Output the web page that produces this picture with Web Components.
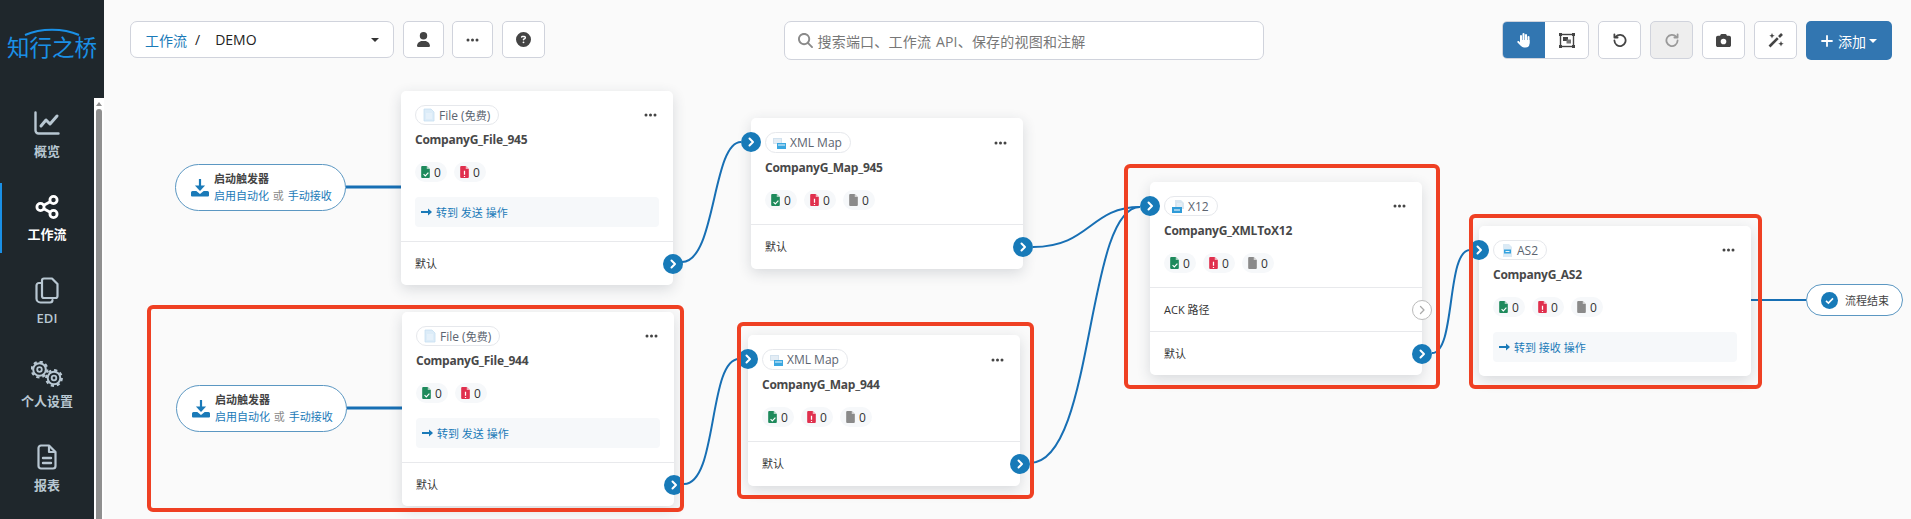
<!DOCTYPE html>
<html lang="zh">
<head>
<meta charset="utf-8">
<title>工作流</title>
<style>
	html, body{ margin: 0; height: 100%; overflow: hidden; background: #fafafa; }
	body{ font-family: "Open Sans", "Noto Sans CJK SC", sans-serif; font-size: 14px; color: #333; }
	.cjk{ font-size: 11px; }
</style>
</head>
<body>
<app-shell>
	<side-nav slot="nav">
		<nav-item icon="chart">概览</nav-item>
		<nav-item icon="share" active>工作流</nav-item>
		<nav-item icon="copy">EDI</nav-item>
		<nav-item icon="gears">个人设置</nav-item>
		<nav-item icon="report">报表</nav-item>
	</side-nav>
	<top-bar slot="top"></top-bar>
	<flow-canvas>
		<flow-wires></flow-wires>

		<start-pill x="175" y="164"></start-pill>
		<start-pill x="176" y="385"></start-pill>

		<flow-card x="401" y="91" icon="file">
			<span slot="chip">File (<span class="cjk">免费</span>)</span>
			<span slot="name">CompanyG_File_945</span>
			<stat-pill slot="stats" type="ok"></stat-pill>
			<stat-pill slot="stats" type="err"></stat-pill>
			<go-action slot="body">转到 发送 操作</go-action>
			<out-row>默认</out-row>
		</flow-card>

		<flow-card x="402" y="312" icon="file">
			<span slot="chip">File (<span class="cjk">免费</span>)</span>
			<span slot="name">CompanyG_File_944</span>
			<stat-pill slot="stats" type="ok"></stat-pill>
			<stat-pill slot="stats" type="err"></stat-pill>
			<go-action slot="body">转到 发送 操作</go-action>
			<out-row>默认</out-row>
		</flow-card>

		<flow-card x="751" y="118" icon="map" in tall>
			<span slot="chip">XML Map</span>
			<span slot="name">CompanyG_Map_945</span>
			<stat-pill slot="stats" type="ok"></stat-pill>
			<stat-pill slot="stats" type="err"></stat-pill>
			<stat-pill slot="stats" type="none"></stat-pill>
			<out-row tall>默认</out-row>
		</flow-card>

		<flow-card x="748" y="335" icon="map" in tall>
			<span slot="chip">XML Map</span>
			<span slot="name">CompanyG_Map_944</span>
			<stat-pill slot="stats" type="ok"></stat-pill>
			<stat-pill slot="stats" type="err"></stat-pill>
			<stat-pill slot="stats" type="none"></stat-pill>
			<out-row tall>默认</out-row>
		</flow-card>

		<flow-card x="1150" y="182" icon="x12" in>
			<span slot="chip">X12</span>
			<span slot="name">CompanyG_XMLToX12</span>
			<stat-pill slot="stats" type="ok"></stat-pill>
			<stat-pill slot="stats" type="err"></stat-pill>
			<stat-pill slot="stats" type="none"></stat-pill>
			<out-row off>ACK 路径</out-row>
			<out-row>默认</out-row>
		</flow-card>

		<flow-card x="1479" y="226" icon="as2" in>
			<span slot="chip">AS2</span>
			<span slot="name">CompanyG_AS2</span>
			<stat-pill slot="stats" type="ok"></stat-pill>
			<stat-pill slot="stats" type="err"></stat-pill>
			<stat-pill slot="stats" type="none"></stat-pill>
			<go-action slot="body">转到 接收 操作</go-action>
		</flow-card>

		<end-pill x="1806" y="284"></end-pill>

		<mark-box x="147" y="305" w="537" h="207"></mark-box>
		<mark-box x="737" y="322" w="297" h="177"></mark-box>
		<mark-box x="1124" y="164" w="316" h="225"></mark-box>
		<mark-box x="1469" y="214" w="293" h="175"></mark-box>
	</flow-canvas>
</app-shell>

<script>
const FONT = '"Open Sans", "Noto Sans CJK SC", sans-serif';

const ICONS = {
	chart: `<svg width="26" height="24" viewBox="0 0 26 24" fill="none" stroke="#b8c7d2" stroke-width="2.4" stroke-linecap="round" stroke-linejoin="round"><path d="M1.500 1.500v18a3 3 0 0 0 3 3h20"/><path d="M7 15l5-6 4 4 7-8" stroke-width="3"/></svg>`,
	share: `<svg width="24" height="24" viewBox="0 0 24 24" fill="none" stroke="#fff" stroke-width="2.800"><circle cx="18.500" cy="5" r="3.600"/><circle cx="5.500" cy="12" r="3.600"/><circle cx="18.500" cy="19" r="3.600"/><path d="M8.800 10.200l6.400-3.400M8.800 13.800l6.400 3.400"/></svg>`,
	copy: `<svg width="24" height="27" viewBox="0 0 24 27" fill="none" stroke="#b8c7d2" stroke-width="2.200" stroke-linejoin="round" stroke-linecap="round"><path d="M7 3.500a2 2 0 0 1 2-2h8l5.500 5.500v12a2 2 0 0 1-2 2H9a2 2 0 0 1-2-2z"/><path d="M7 6H4a2.500 2.500 0 0 0-2.500 2.500v13A4 4 0 0 0 5.500 25.500H15a2.500 2.500 0 0 0 2.500-2.500"/></svg>`,
	gears: `<svg width="32" height="26" viewBox="0 0 32 26" fill="none" stroke="#b8c7d2"><g><circle cx="8.500" cy="8.500" r="6.300" stroke-width="2"/><circle cx="8.500" cy="8.500" r="7.800" stroke-width="2.200" stroke-dasharray="3.200 2.900"/><circle cx="8.500" cy="8.500" r="2.300" stroke-width="1.800"/></g><g><circle cx="23" cy="17" r="6.300" stroke-width="2"/><circle cx="23" cy="17" r="7.800" stroke-width="2.200" stroke-dasharray="3.200 2.900"/><circle cx="23" cy="17" r="2.300" stroke-width="1.800"/></g></svg>`,
	report: `<svg width="20" height="26" viewBox="0 0 20 26" fill="none" stroke="#b8c7d2" stroke-width="2.200" stroke-linejoin="round"><path d="M1.500 4a2.500 2.500 0 0 1 2.500-2.500h8l6.500 6.500v14a2.500 2.500 0 0 1-2.500 2.500H4a2.500 2.500 0 0 1-2.500-2.500z"/><path d="M12 1.500V8h6.500"/><path d="M6 14h8M6 19h8" stroke-width="2.400" stroke-linecap="round"/></svg>`,
	user: `<svg width="13" height="15" viewBox="0 0 448 512" fill="#444"><path d="M224 256A128 128 0 1 0 224 0a128 128 0 1 0 0 256zm-45.700 48C79.800 304 0 383.800 0 482.300C0 498.700 13.300 512 29.700 512H418.300c16.400 0 29.700-13.300 29.700-29.700C448 383.800 368.200 304 269.700 304H178.300z"/></svg>`,
	dots: `<svg width="13" height="4" viewBox="0 0 13 4" fill="#444"><circle cx="2" cy="2" r="1.500"/><circle cx="6.500" cy="2" r="1.500"/><circle cx="11" cy="2" r="1.500"/></svg>`,
	help: `<svg width="15" height="15" viewBox="0 0 512 512" fill="#444"><path d="M256 512A256 256 0 1 0 256 0a256 256 0 1 0 0 512zM169.800 165.300c7.900-22.300 29.100-37.300 52.800-37.300h58.300c34.900 0 63.100 28.300 63.100 63.100c0 22.600-12.100 43.500-31.700 54.800L280 264.400c-.2 13-10.900 23.600-24 23.600c-13.300 0-24-10.700-24-24V250.500c0-8.600 4.600-16.500 12.100-20.800l44.300-25.400c4.700-2.700 7.600-7.700 7.600-13.100c0-8.400-6.800-15.100-15.100-15.100H222.600c-3.400 0-6.400 2.100-7.500 5.300l-.4 1.200c-4.400 12.500-18.200 19-30.600 14.600s-19-18.200-14.600-30.600l.4-1.200zM224 352a32 32 0 1 1 64 0 32 32 0 1 1 -64 0z"/></svg>`,
	search: `<svg width="15" height="15" viewBox="0 0 512 512" fill="#8a8a8a"><path d="M416 208c0 45.900-14.900 88.300-40 122.700L502.600 457.400c12.500 12.500 12.500 32.800 0 45.300s-32.800 12.500-45.300 0L330.700 376c-34.400 25.200-76.800 40-122.700 40C93.100 416 0 322.900 0 208S93.100 0 208 0S416 93.100 416 208zM208 352a144 144 0 1 0 0-288 144 144 0 1 0 0 288z"/></svg>`,
	hand: `<svg width="16" height="16" viewBox="0 0 16 16" fill="#fff"><rect x="4" y="3" width="2" height="8" rx="1"/><rect x="6.500" y="1" width="2" height="8" rx="1"/><rect x="9" y="2" width="2" height="8" rx="1"/><rect x="11.500" y="4" width="2" height="8" rx="1"/><path d="M4 8h9.500v3.500a4 4 0 0 1-4 4H8a4 4 0 0 1-3-1.400L1.500 10.500c-.7-.9.600-2 1.500-1.200L4 10.500z"/></svg>`,
	frame: `<svg width="16" height="15" viewBox="0 0 16 15" fill="none" stroke="#444"><rect x="1.500" y="1.500" width="13" height="12" stroke-width="1.400"/><g fill="#444" stroke="none"><rect width="3" height="3"/><rect x="13" width="3" height="3"/><rect y="12" width="3" height="3"/><rect x="13" y="12" width="3" height="3"/><rect x="4" y="4" width="5" height="4"/></g><rect x="7.500" y="6.500" width="4.500" height="4" fill="#777" stroke="none"/></svg>`,
	undo: `<svg width="14" height="14" viewBox="0 0 14 14" fill="none" stroke="#444" stroke-width="1.800" stroke-linecap="round" stroke-linejoin="round"><path d="M2.800 3.700A5.600 5.600 0 1 1 1.400 7.500"/><path d="M1.400 1.300v3.200h3.200"/></svg>`,
	redo: `<svg width="14" height="14" viewBox="0 0 14 14" fill="none" stroke="#999" stroke-width="1.800" stroke-linecap="round" stroke-linejoin="round"><path d="M11.200 3.700A5.600 5.600 0 1 0 12.600 7.500"/><path d="M12.600 1.300v3.200H9.400"/></svg>`,
	camera: `<svg width="15" height="15" viewBox="0 0 512 512" fill="#444"><path d="M149.100 64.800L138.700 96H64C28.700 96 0 124.700 0 160V416c0 35.300 28.700 64 64 64H448c35.300 0 64-28.700 64-64V160c0-35.300-28.700-64-64-64H373.300L362.900 64.800C356.400 45.200 338.100 32 317.400 32H194.600c-20.700 0-39 13.200-45.500 32.800zM256 192a96 96 0 1 1 0 192 96 96 0 1 1 0-192z"/></svg>`,
	wand: `<svg width="16" height="16" viewBox="0 0 16 16" fill="#444"><path d="M1.500 14.500L9.800 6.200" stroke="#444" stroke-width="2.600"/><path d="M11 5L14 2" stroke="#444" stroke-width="2.600"/><path d="M4 1l.8 1.900 1.900.8-1.900.8L4 6.400l-.8-1.900-1.900-.8 1.900-.8zM13 9l.8 1.900 1.900.8-1.900.8L13 14.400l-.8-1.900-1.900-.8 1.900-.8z"/></svg>`,
	plus: `<svg width="12" height="12" viewBox="0 0 12 12" stroke="#fff" stroke-width="1.800" stroke-linecap="round"><path d="M6 1v10M1 6h10"/></svg>`,
	download: `<svg width="18" height="18" viewBox="0 0 18 18" fill="#1a7ab8"><path d="M9 .5v9.200" stroke="#1a7ab8" stroke-width="2.200" stroke-linecap="round"/><path d="M3.900 6.500h10.200L9 12z"/><path d="M1.500 12h3.800L9 15l3.700-3h3.800a1.500 1.500 0 0 1 1.500 1.500v3a1 1 0 0 1-1 1H1a1 1 0 0 1-1-1v-3A1.500 1.500 0 0 1 1.500 12z"/></svg>`,
	chipfile: `<svg width="12" height="14" viewBox="0 0 12 14"><path d="M1 1h7l3 3v9H1z" fill="#dcecf8" stroke="#c6dff1" stroke-width=".8"/><path d="M3 6h6M3 8h6M3 10h6" stroke="#f3f9fd" stroke-width=".8"/></svg>`,
	chipmap: `<svg width="13" height="12" viewBox="0 0 13 12"><path d="M0 1h9v6H0z" fill="#d3e2ee"/><path d="M1 3h7M1 5h7" stroke="#fff" stroke-width=".8"/><path d="M4 6h9v6H4z" fill="#3ba7e0"/><path d="M5 8h7" stroke="#fff" stroke-width=".9"/></svg>`,
	chipx12: `<svg width="12" height="13" viewBox="0 0 12 13"><path d="M3 0h6l3 3v6H3z" fill="#d9e6f0"/><path d="M5 4h5M5 6h5" stroke="#f5fafd" stroke-width=".8"/><path d="M0 7h10v6H0z" fill="#2f9bd8"/><path d="M2 10h6" stroke="#fff" stroke-width="1"/></svg>`,
	chipas2: `<svg width="12" height="13" viewBox="0 0 12 13"><path d="M2 0h6l3 3v10H2z" fill="#dbeaf5"/><path d="M3 5.500h7v4H3z" fill="#35a3df"/><path d="M4.500 7.500h4" stroke="#fff" stroke-width=".9"/></svg>`
};

// nodes on the canvas give page coordinates, the canvas starts below the toolbar
function place(el){
	el.style.left = (el.getAttribute('x') - 104) + 'px';
	el.style.top = (el.getAttribute('y') - 80) + 'px';
}

class AppShell extends HTMLElement{
	constructor(){
		super();
		this.attachShadow({mode: 'open'});
		this.shadowRoot.innerHTML = `
		<style>
			:host{ display: flex; width: 100%; height: 100vh; font-family: ${FONT}; }
			main{ flex: 1; display: flex; flex-direction: column; min-width: 0; }
		</style>
		<slot name="nav"></slot>
		<main><slot name="top"></slot><slot></slot></main>`;
	}
}

class SideNav extends HTMLElement{
	constructor(){
		super();
		this.attachShadow({mode: 'open'});
		this.shadowRoot.innerHTML = `
		<style>
			:host{ display: flex; flex-direction: column; width: 104px; flex: none; background: #1f272c; overflow: hidden; }
			.logo{ height: 98px; box-sizing: border-box; padding: 28px 0 0 0; display: flex; flex-direction: column; align-items: center; }
			.logo svg{ display: block; margin-bottom: -3px; }
			.logo span{ color: #1a90e6; font-size: 22.5px; line-height: 30px; white-space: nowrap; }
			.rest{ flex: 1; display: flex; min-height: 0; }
			nav{ width: 94px; display: flex; flex-direction: column; gap: 13.5px; padding-top: 1px; }
			.track{ width: 10px; background: #fff; position: relative; display: flex; flex-direction: column; }
			.arrow{ height: 11px; display: flex; justify-content: center; align-items: center; padding-left: 0; }
			.thumb{ flex: 1; width: 6px; margin-left: 2px; background: #8f8f8f; border-radius: 3px 3px 0 0; }
		</style>
		<div class="logo">
			<svg width="56" height="8" viewBox="0 0 56 8" fill="none"><path d="M1 7C17 0 39 0 55 7" stroke="#1a90e6" stroke-width="2"/></svg>
			<span>知行之桥</span>
		</div>
		<div class="rest">
			<nav><slot></slot></nav>
			<div class="track">
				<div class="arrow"><svg width="6" height="4"><path d="M3 0l3 4H0z" fill="#8f8f8f"/></svg></div>
				<div class="thumb"></div>
			</div>
		</div>`;
	}
}

class NavItem extends HTMLElement{
	constructor(){
		super();
		this.attachShadow({mode: 'open'});
		this.shadowRoot.innerHTML = `
		<style>
			:host{ display: flex; flex-direction: column; align-items: center; height: 70px; box-sizing: border-box; padding-top: 10.5px; flex: none; position: relative; color: #b8c7d2; font-size: 13px; font-weight: 600; }
			:host([active]){ color: #fff; font-weight: 700; }
			:host([active])::before{ content: ''; position: absolute; left: 0; top: 0; bottom: 0; width: 1.500px; background: #1a90e6; }
			.icon{ height: 27px; display: flex; align-items: center; justify-content: center; }
			.text{ margin-top: 4px; line-height: 20px; white-space: nowrap; }
		</style>
		<div class="icon">${ICONS[this.getAttribute('icon')]}</div>
		<div class="text"><slot></slot></div>`;
	}
}

class ToolBtn extends HTMLElement{
	constructor(){
		super();
		this.attachShadow({mode: 'open'});
		this.shadowRoot.innerHTML = `
		<style>
			:host{ display: flex; align-items: center; justify-content: center; box-sizing: border-box; width: var(--w, 43px); height: var(--h, 38px); background: #fff; border: 1px solid #d0d3dc; border-radius: 5px; flex: none; }
			:host([off]){ background: #eee; }
		</style>
		${ICONS[this.getAttribute('icon')]}`;
	}
}

class CrumbSelect extends HTMLElement{
	constructor(){
		super();
		this.attachShadow({mode: 'open'});
		this.shadowRoot.innerHTML = `
		<style>
			:host{ display: flex; align-items: center; box-sizing: border-box; width: 264px; height: 37px; background: #fff; border: 1px solid #d0d3dc; border-radius: 7px; padding: 0 14px; font-size: 14px; color: #222; flex: none; }
			a{ color: #1a7ab8; }
			.sep{ margin: 0 15px 0 8px; }
			.caret{ margin-left: auto; width: 0; height: 0; border: 4px solid transparent; border-top: 4.500px solid #333; border-bottom: 0; }
		</style>
		<a>工作流</a><span class="sep">/</span><span>DEMO</span><span class="caret"></span>`;
	}
}

class SearchBox extends HTMLElement{
	constructor(){
		super();
		this.attachShadow({mode: 'open'});
		this.shadowRoot.innerHTML = `
		<style>
			:host{ display: flex; align-items: center; gap: 5px; box-sizing: border-box; width: 480px; height: 39px; background: #fff; border: 1px solid #d0d3dc; border-radius: 7px; padding: 0 13px; font-size: 14px; color: #777; flex: none; letter-spacing: .2px; word-spacing: 1px; }
			svg{ flex: none; }
		</style>
		${ICONS.search}<span>搜索端口、工作流 API、保存的视图和注解</span>`;
	}
}

class TopBar extends HTMLElement{
	constructor(){
		super();
		this.attachShadow({mode: 'open'});
		this.shadowRoot.innerHTML = `
		<style>
			:host{ display: flex; justify-content: space-between; align-items: flex-start; box-sizing: border-box; height: 80px; padding: 21px 19px 0 26px; flex: none; position: relative; z-index: 2; }
			.group{ display: flex; gap: 9px; align-items: flex-start; }
			.left tool-btn{ --h: 37px; --w: 41px; }
			.left tool-btn:nth-child(3){ margin-left: -1px; }
			.left tool-btn:last-child{ --w: 43px; }
			.toggle{ display: flex; width: 87px; height: 38px; box-sizing: border-box; border: 1px solid #d0d3dc; border-radius: 5px; overflow: hidden; background: #fff; }
			.toggle div{ display: flex; align-items: center; justify-content: center; flex: 1; }
			.toggle .on{ background: #3276b1; flex: none; width: 42px; }
			.add{ display: flex; align-items: center; justify-content: center; box-sizing: border-box; width: 86px; height: 39px; border-radius: 5px; background: #3276b1; color: #fff; font-size: 14px; }
			.add span{ margin: 0 3px 0 5px; }
			.add i{ width: 0; height: 0; border: 4px solid transparent; border-top: 4px solid #fff; border-bottom: 0; }
		</style>
		<div class="group left">
			<crumb-select></crumb-select>
			<tool-btn icon="user"></tool-btn>
			<tool-btn icon="dots"></tool-btn>
			<tool-btn icon="help"></tool-btn>
		</div>
		<search-box></search-box>
		<div class="group">
			<div class="toggle"><div class="on">${ICONS.hand}</div><div>${ICONS.frame}</div></div>
			<tool-btn icon="undo"></tool-btn>
			<tool-btn icon="redo" off></tool-btn>
			<tool-btn icon="camera"></tool-btn>
			<tool-btn icon="wand"></tool-btn>
			<div class="add">${ICONS.plus}<span>添加</span><i></i></div>
		</div>`;
	}
}

class FlowCanvas extends HTMLElement{
	constructor(){
		super();
		this.attachShadow({mode: 'open'});
		this.shadowRoot.innerHTML = `
		<style>
			:host{ display: block; position: relative; flex: 1; min-height: 0; }
		</style>
		<slot></slot>`;
	}
}

class FlowWires extends HTMLElement{
	constructor(){
		super();
		this.attachShadow({mode: 'open'});
		this.shadowRoot.innerHTML = `
		<style>
			:host{ display: block; position: absolute; left: 0; top: 0; }
			svg{ display: block; }
			path{ fill: none; stroke: #176fb4; stroke-width: 2; }
			.flat{ stroke-width: 3; }
		</style>
		<svg width="1807" height="439" viewBox="104 80 1807 439">
			<path class="flat" d="M346 187H401"/>
			<path class="flat" d="M347 408H402"/>
			<path d="M682 262C716 262 712 142 741 142"/>
			<path d="M684 484C718 484 708 359 739 359"/>
			<path d="M1033 247C1090 247 1090 207 1140 207"/>
			<path d="M1030 463C1095 463 1085 207 1140 207"/>
			<path d="M1432 353C1456 353 1446 250 1470 250"/>
			<path d="M1751 300H1806"/>
		</svg>`;
	}
}

class PortDot extends HTMLElement{
	constructor(){
		super();
		this.attachShadow({mode: 'open'});
		this.shadowRoot.innerHTML = `
		<style>
			:host{ display: flex; align-items: center; justify-content: center; box-sizing: border-box; position: absolute; width: 20px; height: 20px; border-radius: 50%; background: #177ab8; }
			:host([off]){ background: #fff; border: 1px solid #bbb; }
			polyline{ fill: none; stroke: #fff; stroke-width: 2; stroke-linecap: round; stroke-linejoin: round; }
			:host([off]) polyline{ stroke: #aaa; stroke-width: 1.300; }
		</style>
		<svg width="8" height="10" viewBox="0 0 8 10"><polyline points="2.500,1.500 6,5 2.500,8.500"/></svg>`;
	}
}

class OutRow extends HTMLElement{
	constructor(){
		super();
		this.attachShadow({mode: 'open'});
		const off = this.hasAttribute('off') ? 'off' : '';
		this.shadowRoot.innerHTML = `
		<style>
			:host{ display: flex; align-items: center; height: 44px; box-sizing: border-box; border-top: 1px solid #e8e9ec; padding: 0 0 2px 14px; font-size: 11px; color: #333; position: relative; }
			:host([tall]){ height: 45px; }
			port-dot{ right: -10px; top: 11.500px; }
		</style>
		<slot></slot><port-dot ${off}></port-dot>`;
	}
}

class GoAction extends HTMLElement{
	constructor(){
		super();
		this.attachShadow({mode: 'open'});
		this.shadowRoot.innerHTML = `
		<style>
			:host{ display: flex; align-items: center; gap: 4px; height: 30px; box-sizing: border-box; margin-top: 15px; padding-left: 6px; border-radius: 4px; background: #f6f8fa; color: #1a7ab8; font-size: 11px; }
		</style>
		<svg width="11" height="8" viewBox="0 0 11 8"><path d="M0 4h9" stroke="#1a7ab8" stroke-width="2"/><path d="M7 0.500L11 4 7 7.500z" fill="#1a7ab8"/></svg>
		<slot></slot>`;
	}
}

class StatPill extends HTMLElement{
	constructor(){
		super();
		this.attachShadow({mode: 'open'});
		const type = this.getAttribute('type');
		const color = {ok: '#1e8a5c', err: '#e0304e', none: '#8a8a8a'}[type];
		const mark = {
			ok: '<path d="M2.500 8.500l1.800 1.800 3.200-3.400" fill="none" stroke="#fff" stroke-width="1.200"/>',
			err: '<path d="M4.500 5v4M4.500 10.300v1.200" stroke="#fff" stroke-width="1.300"/>',
			none: ''
		}[type];
		this.shadowRoot.innerHTML = `
		<style>
			:host{ display: flex; align-items: center; box-sizing: border-box; width: 32px; height: 20px; padding-left: 6px; gap: 4px; border-radius: 10px; background: #f6f8fa; font-size: 12px; color: #333; }
			:host(:not(:last-child)){ margin-right: 7px; }
		</style>
		<svg width="9" height="12" viewBox="0 0 9 12.500"><path d="M1 0h4.800L9 3.200V11.500a1 1 0 0 1-1 1H1a1 1 0 0 1-1-1V1a1 1 0 0 1 1-1z" fill="${color}"/><path d="M5.800 0V3.200H9z" fill="#fff" opacity=".6"/>${mark}</svg>
		<span>0</span>`;
	}
}

class FlowCard extends HTMLElement{
	constructor(){
		super();
		this.attachShadow({mode: 'open'});
		const port = this.hasAttribute('in') ? '<port-dot class="in"></port-dot>' : '';
		const icon = ICONS['chip' + this.getAttribute('icon')];
		this.shadowRoot.innerHTML = `
		<style>
			:host{ display: block; position: absolute; width: 272px; box-sizing: border-box; background: #fff; border-radius: 5px; box-shadow: 0 4px 14px rgba(40, 50, 70, .16); }
			.in{ left: -10px; top: 14px; }
			.body{ padding: 14px 14px 14px; }
			.head{ display: flex; justify-content: space-between; align-items: center; height: 20px; }
			:host([tall]) .head{ height: 21px; }
			.chip{ display: flex; align-items: center; gap: 4px; height: 100%; box-sizing: border-box; padding: 0 8px 0 7px; border: 1px solid #e6e8ec; border-radius: 11px; font-size: 12px; color: #5b6470; }
			.menu{ display: flex; margin-right: 2px; }
			.name{ margin-top: 7px; line-height: 16px; font-size: 12px; font-weight: 700; letter-spacing: -.25px; color: #484848; }
			.stats{ display: flex; margin-top: 14px; }
		</style>
		${port}
		<div class="body">
			<div class="head">
				<div class="chip">${icon}<slot name="chip"></slot></div>
				<div class="menu">${ICONS.dots}</div>
			</div>
			<div class="name"><slot name="name"></slot></div>
			<div class="stats"><slot name="stats"></slot></div>
			<slot name="body"></slot>
		</div>
		<slot></slot>`;
		place(this);
	}
}

class StartPill extends HTMLElement{
	constructor(){
		super();
		this.attachShadow({mode: 'open'});
		this.shadowRoot.innerHTML = `
		<style>
			:host{ display: flex; align-items: center; gap: 5px; position: absolute; box-sizing: border-box; width: 171px; height: 47px; padding-left: 15px; background: #fff; border: 1px solid #5b97c2; border-radius: 24px; font-size: 11px; }
			b{ display: block; font-weight: 600; color: #444; line-height: 16px; }
			span{ display: block; color: #1a7ab8; line-height: 18px; white-space: nowrap; word-spacing: 1px; }
			em{ font-style: normal; color: #888; }
		</style>
		${ICONS.download}
		<div><b>启动触发器</b><span>启用自动化 <em>或</em> 手动接收</span></div>`;
		place(this);
	}
}

class EndPill extends HTMLElement{
	constructor(){
		super();
		this.attachShadow({mode: 'open'});
		this.shadowRoot.innerHTML = `
		<style>
			:host{ display: flex; align-items: center; gap: 7px; position: absolute; box-sizing: border-box; width: 97px; height: 32px; padding-left: 14px; background: #fff; border: 1px solid #5b97c2; border-radius: 16px; font-size: 11px; color: #444; white-space: nowrap; }
		</style>
		<svg width="17" height="17" viewBox="0 0 17 17"><circle cx="8.500" cy="8.500" r="8.500" fill="#177ab8"/><path d="M5 8.800l2.400 2.300L12 6.400" fill="none" stroke="#fff" stroke-width="1.600"/></svg>
		<span>流程结束</span>`;
		place(this);
	}
}

class MarkBox extends HTMLElement{
	constructor(){
		super();
		this.attachShadow({mode: 'open'});
		this.shadowRoot.innerHTML = `
		<style>
			:host{ display: block; position: absolute; box-sizing: border-box; border: 4px solid #ef4023; border-radius: 6px; pointer-events: none; }
		</style>`;
		this.style.width = this.getAttribute('w') + 'px';
		this.style.height = this.getAttribute('h') + 'px';
		place(this);
	}
}

window.customElements.define('app-shell', AppShell);
window.customElements.define('side-nav', SideNav);
window.customElements.define('nav-item', NavItem);
window.customElements.define('tool-btn', ToolBtn);
window.customElements.define('crumb-select', CrumbSelect);
window.customElements.define('search-box', SearchBox);
window.customElements.define('top-bar', TopBar);
window.customElements.define('flow-canvas', FlowCanvas);
window.customElements.define('flow-wires', FlowWires);
window.customElements.define('port-dot', PortDot);
window.customElements.define('out-row', OutRow);
window.customElements.define('go-action', GoAction);
window.customElements.define('stat-pill', StatPill);
window.customElements.define('flow-card', FlowCard);
window.customElements.define('start-pill', StartPill);
window.customElements.define('end-pill', EndPill);
window.customElements.define('mark-box', MarkBox);
</script>
</body>
</html>
